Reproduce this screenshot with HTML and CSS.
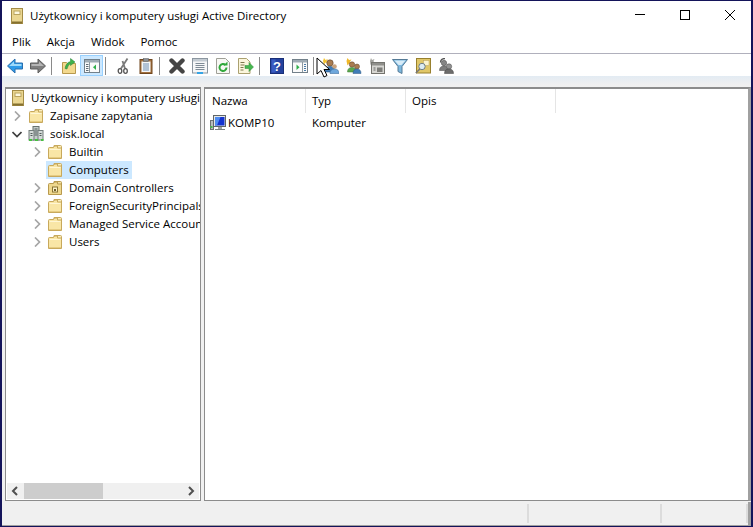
FILE: index.html
```html
<!DOCTYPE html>
<html lang="pl">
<head>
  <meta charset="UTF-8">
  <title>Użytkownicy i komputery usługi Active Directory</title>
  <link rel="stylesheet" href="styles.css">
</head>
<body>
<svg class="defs" width="0" height="0">
  <defs>
    <symbol id="i-folder" viewBox="0 0 16 16">
      <path d="M7 1.500h6.500q1 0 1 1V5H7z" fill="#fbeebb" stroke="#c8a95c"/>
      <path d="M1.500 4.500q0-1 1-1h4l1-1.500h3v2h4v10.500h-13z" fill="#f9e6a6" stroke="#c8a95c"/>
      <path d="M2.500 5.500h11" stroke="#fff6d4"/>
      <path d="M2 13.500h12" stroke="#e6cc82"/>
    </symbol>
    <symbol id="i-folder-ou" viewBox="0 0 16 16">
      <path d="M7 1.500h6.500q1 0 1 1V5H7z" fill="#f4e2a4" stroke="#b99a4e"/>
      <path d="M1.500 4.500q0-1 1-1h4l1-1.500h3v2h4v10.500h-13z" fill="#efd88e" stroke="#b99a4e"/>
      <rect x="5.500" y="7" width="5" height="5" fill="#fdf3c8" stroke="#8a7434"/>
      <rect x="7" y="9" width="2" height="2" fill="#6e5c26"/>
    </symbol>
    <symbol id="i-snapin" viewBox="0 0 16 16">
      <rect x="2.500" y="0.500" width="11" height="15" fill="#ead691" stroke="#a48c46"/>
      <rect x="5" y="3" width="6" height="3.500" fill="#fdf8df" stroke="#b9a35f"/>
      <path d="M3 14.500h10" stroke="#85702f" stroke-width="2"/>
    </symbol>
    <symbol id="i-domain" viewBox="0 0 16 16">
      <rect x="5" y="0.500" width="6" height="13.500" fill="#c4cccc" stroke="#67716f"/>
      <rect x="1" y="4.500" width="5" height="9.500" fill="#d4dad8" stroke="#727d7b"/>
      <rect x="10" y="4.500" width="5" height="9.500" fill="#d4dad8" stroke="#727d7b"/>
      <path d="M6.500 3h3M6.500 5h3M6.500 7h3M6.500 9h3M2.500 7.500h2M2.500 9.500h2M11.500 7.500h2M11.500 9.500h2" stroke="#4f5a59"/>
      <rect x="1" y="13" width="3" height="2" fill="#46c040"/>
      <rect x="7" y="13" width="3" height="2" fill="#46c040"/>
      <rect x="13" y="13" width="2.500" height="2" fill="#46c040"/>
    </symbol>
    <symbol id="i-computer" viewBox="0 0 16 16">
      <rect x="0.500" y="5.500" width="3" height="9" fill="#b8bebe" stroke="#6c7372"/>
      <rect x="0.500" y="11" width="2" height="2" fill="#49b949"/>
      <rect x="3.500" y="0.500" width="12" height="11" fill="#e4e6e6" stroke="#5f6668"/>
      <path d="M5 2h9.500v8.500H5z" fill="#1434d0"/>
      <path d="M5 2h5.500L7 10.500H5z" fill="#4f8cf2"/>
      <path d="M8 12h4v2H8z" fill="#9ea4a4"/>
      <path d="M5 14.500h10" stroke="#7c8282"/>
    </symbol>
    <symbol id="i-back" viewBox="0 0 16 16">
      <path d="M8 1 .5 8 8 15v-4h7.500V5H8z" fill="#2f9ae8" stroke="#2a6fae"/>
      <path d="M7 3.500 2 8h12.500V6H7z" fill="#9fdafb"/>
    </symbol>
    <symbol id="i-forward" viewBox="0 0 16 16">
      <path d="M8 1 15.500 8 8 15v-4H.500V5H8z" fill="#7f7f7f" stroke="#5e5e5e"/>
      <path d="M9 3.500 14 8H1.500V6H9z" fill="#b5b5b5"/>
    </symbol>
    <symbol id="i-up" viewBox="0 0 16 16">
      <path d="M1.500 15.500V4.500h4l1 1h8v10z" fill="#f3d98e" stroke="#b8994d"/>
      <path d="M4 10.500Q5 4.500 9.500 3.500V.500l4.500 3.500-4.500 3.500V5.800Q7 6.500 6 11z" fill="#3fb24a" stroke="#24803a" stroke-width=".5"/>
    </symbol>
    <symbol id="i-tree" viewBox="0 0 16 16">
      <rect x="0.500" y="1.500" width="15" height="13" fill="#fafafa" stroke="#72808a"/>
      <rect x="1" y="2" width="14" height="2.500" fill="#9fabb4"/>
      <path d="M5.500 4v10" stroke="#8d99a1"/>
      <path d="M2 6.500h2.500M2 8.500h2.500M2 10.500h2.500M2 12.500h2.500" stroke="#5f6c75"/>
      <path d="M12 6.500v5.500L9 9.250z" fill="#2faf4a"/>
    </symbol>
    <symbol id="i-cut" viewBox="0 0 16 16">
      <path d="M12.500.5 6 10.500M7.500 3l2.500 7.500" stroke="#7a7a7a" stroke-width="1.800" fill="none"/>
      <ellipse cx="5" cy="13" rx="1.800" ry="2.300" fill="none" stroke="#555" stroke-width="1.300"/>
      <ellipse cx="10.500" cy="13" rx="1.800" ry="2.300" fill="none" stroke="#555" stroke-width="1.300"/>
    </symbol>
    <symbol id="i-paste" viewBox="0 0 16 16">
      <rect x="2" y="1.500" width="12" height="14" fill="#a2703f" stroke="#70471f"/>
      <rect x="3.500" y="3.500" width="9" height="10.500" fill="#f4f6f8"/>
      <path d="M5 6h6M5 8h6M5 10h6M5 12h6" stroke="#6e8fb4"/>
      <rect x="5.500" y="0.500" width="5" height="3" fill="#8b8f94" stroke="#5a5e62" stroke-width=".5"/>
    </symbol>
    <symbol id="i-delete" viewBox="0 0 16 16">
      <path d="M2.500 2.500 13.500 13.500M13.500 2.500 2.500 13.500" stroke="#454545" stroke-width="4.400" stroke-linecap="round"/>
    </symbol>
    <symbol id="i-props" viewBox="0 0 16 16">
      <rect x="0.500" y="0.500" width="15" height="14.500" fill="#f6f7f8" stroke="#8c96a0"/>
      <rect x="1" y="1" width="14" height="2.500" fill="#c3cbd2"/>
      <path d="M3.500 5.500h9M3.500 7.500h9M3.500 9.500h9M3.500 11.500h9" stroke="#7f8b96"/>
      <path d="M5 14h6v2H5z" fill="#35a4e6"/>
    </symbol>
    <symbol id="i-refresh" viewBox="0 0 16 16">
      <path d="M1.500 .5h9l4 4v11h-13z" fill="#f8f8f4" stroke="#a0a098"/>
      <path d="M11.500 9.500a3.500 3.500 0 1 1-1-2.500" fill="none" stroke="#30a83a" stroke-width="2"/>
      <path d="M8.500 7.500h4V3.500z" fill="#30a83a"/>
    </symbol>
    <symbol id="i-export" viewBox="0 0 16 16">
      <path d="M.5 .5h8l3.500 3.500v11.500H.5z" fill="#fbf6dc" stroke="#aba170"/>
      <path d="M2.500 4.500h4M2.500 7h4M2.500 9.500h3M2.500 12h3" stroke="#7f784c"/>
      <path d="M7 7.500h4V4.500l4.500 4.500-4.500 4.500V10.500H7z" fill="#46b74f" stroke="#2d8a3b" stroke-width=".5"/>
    </symbol>
    <symbol id="i-help" viewBox="0 0 16 16">
      <rect x="1.500" y="0.500" width="13" height="15" fill="#24429e" stroke="#1a2f78"/>
      <rect x="2.500" y="1.500" width="4" height="13" fill="#3a5cc2"/>
      <text x="8" y="13" class="help-mark">?</text>
    </symbol>
    <symbol id="i-view" viewBox="0 0 16 16">
      <rect x="0.500" y="1.500" width="15" height="13" fill="#fafafa" stroke="#72808a"/>
      <rect x="1" y="2" width="14" height="2.500" fill="#9fabb4"/>
      <path d="M10.500 4v10" stroke="#8d99a1"/>
      <path d="M12 6.500h2M12 8.500h2M12 10.500h2M12 12.500h2" stroke="#4a7ba8"/>
      <path d="M4.500 6.500v5.500L7.500 9.250z" fill="#2faf4a"/>
    </symbol>
    <symbol id="i-user" viewBox="0 0 16 16">
      <path d="M0 3l1-3 1.500 2L5 1 3.500 3 5 5 2.500 4.500 1 6.500z" fill="#f4c430"/>
      <circle cx="7" cy="5" r="3.200" fill="#a97c50" stroke="#5e4228" stroke-width=".6"/>
      <path d="M2 14q0-5.500 5-5.500T12 14z" fill="#3f7db8" stroke="#2a5685" stroke-width=".6"/>
      <circle cx="11.500" cy="8.500" r="2.300" fill="#c8a27c"/>
      <path d="M7 15.500q0-4.500 4.500-4.500T16 15.500z" fill="#6ea7dc" stroke="#3e6f9f" stroke-width=".6"/>
    </symbol>
    <symbol id="i-group" viewBox="0 0 16 16">
      <path d="M.5 3l1-3L3 2l2.500-.5L4 3.500 5.500 6 3 5.500 1.500 7.500z" fill="#f0b828"/>
      <circle cx="6" cy="6.500" r="2.700" fill="#a97c50" stroke="#5e4228" stroke-width=".5"/>
      <path d="M1.500 14q0-4.500 4.500-4.500T10.500 14z" fill="#5aa84f" stroke="#3a7a33" stroke-width=".5"/>
      <circle cx="11" cy="8.500" r="2.500" fill="#a97c50" stroke="#5e4228" stroke-width=".5"/>
      <path d="M7 15.500q0-4.500 4-4.500t4 4.500z" fill="#3f7db8" stroke="#2a5685" stroke-width=".5"/>
    </symbol>
    <symbol id="i-ou" viewBox="0 0 16 16">
      <path d="M1 3l1-3 1 2L5.500 1 4.500 3l1 2.500L3 5 1.500 7z" fill="#a4a4a0"/>
      <rect x="2.500" y="4.500" width="13" height="11" fill="#d6d6d2" stroke="#74746f"/>
      <rect x="3" y="5" width="12" height="2.500" fill="#8f8f8b"/>
      <rect x="8" y="9.500" width="5.500" height="4.500" fill="#7d7d79"/>
      <path d="M4.500 10h2M4.500 12h2" stroke="#666"/>
    </symbol>
    <symbol id="i-filter" viewBox="0 0 16 16">
      <path d="M.5 1.500h15L10 8.500v7l-4-2v-5z" fill="#7db8de" stroke="#557a96"/>
      <path d="M2.500 2.500h11L9.500 7h-3z" fill="#d8ecf8"/>
    </symbol>
    <symbol id="i-find" viewBox="0 0 16 16">
      <rect x="1.500" y="0.500" width="14" height="14.500" fill="#e0c768" stroke="#98802e"/>
      <rect x="8.500" y="2.500" width="5.500" height="5" fill="#fbf4d0" stroke="#b9a35f" stroke-width=".5"/>
      <circle cx="7" cy="8.500" r="3.200" fill="#dcecf4" stroke="#6f7e86"/>
      <path d="M4.800 11 .8 15" stroke="#777" stroke-width="1.600"/>
    </symbol>
    <symbol id="i-delegate" viewBox="0 0 16 16">
      <path d="M2.500 4.500Q2.500 .5 7 .5" fill="none" stroke="#555" stroke-width="1.300"/>
      <circle cx="6" cy="5" r="2.700" fill="#858585" stroke="#4a4a4a" stroke-width=".5"/>
      <path d="M1.500 12.500q0-4.500 4.500-4.500t4.500 4.500z" fill="#7c7c7c" stroke="#4a4a4a" stroke-width=".5"/>
      <circle cx="11" cy="8.500" r="2.700" fill="#929292" stroke="#4a4a4a" stroke-width=".5"/>
      <path d="M6.500 15.500q0-4.500 4.500-4.500t4.500 4.500z" fill="#6c6c6c" stroke="#404040" stroke-width=".5"/>
    </symbol>
  </defs>
</svg>

<div class="window">
  <div class="titlebar">
    <svg class="title-icon"><use href="#i-snapin"/></svg>
    <div class="title-text">Użytkownicy i komputery usługi Active Directory</div>
    <div class="win-buttons">
      <div class="win-btn"><svg width="12" height="12" viewBox="0 0 12 12"><path d="M1 5.500h10" stroke="#000"/></svg></div>
      <div class="win-btn"><svg width="12" height="12" viewBox="0 0 12 12"><rect x="1.500" y="1.500" width="9" height="9" fill="none" stroke="#000"/></svg></div>
      <div class="win-btn"><svg width="12" height="12" viewBox="0 0 12 12"><path d="M1 1l10 10M11 1 1 11" stroke="#000" stroke-width="1"/></svg></div>
    </div>
  </div>

  <div class="menubar">
    <span class="menu-item">Plik</span>
    <span class="menu-item">Akcja</span>
    <span class="menu-item">Widok</span>
    <span class="menu-item">Pomoc</span>
  </div>

  <div class="toolbar">
    <div class="tool"><svg class="icon"><use href="#i-back"/></svg></div>
    <div class="tool"><svg class="icon"><use href="#i-forward"/></svg></div>
    <div class="tool-sep"></div>
    <div class="tool"><svg class="icon"><use href="#i-up"/></svg></div>
    <div class="tool tool-active"><svg class="icon"><use href="#i-tree"/></svg></div>
    <div class="tool-sep"></div>
    <div class="tool"><svg class="icon"><use href="#i-cut"/></svg></div>
    <div class="tool"><svg class="icon"><use href="#i-paste"/></svg></div>
    <div class="tool-sep"></div>
    <div class="tool"><svg class="icon"><use href="#i-delete"/></svg></div>
    <div class="tool"><svg class="icon"><use href="#i-props"/></svg></div>
    <div class="tool"><svg class="icon"><use href="#i-refresh"/></svg></div>
    <div class="tool"><svg class="icon"><use href="#i-export"/></svg></div>
    <div class="tool-sep"></div>
    <div class="tool"><svg class="icon"><use href="#i-help"/></svg></div>
    <div class="tool"><svg class="icon"><use href="#i-view"/></svg></div>
    <div class="tool-sep"></div>
    <div class="tool">
      <svg class="icon"><use href="#i-user"/></svg>
      <svg class="cursor" width="14" height="21" viewBox="0 0 14 21"><path d="M1 1v16l4-3.500L8 20l3-1.500-3-6h5.500z" fill="#fff" stroke="#000"/></svg>
    </div>
    <div class="tool"><svg class="icon"><use href="#i-group"/></svg></div>
    <div class="tool"><svg class="icon"><use href="#i-ou"/></svg></div>
    <div class="tool"><svg class="icon"><use href="#i-filter"/></svg></div>
    <div class="tool"><svg class="icon"><use href="#i-find"/></svg></div>
    <div class="tool"><svg class="icon"><use href="#i-delegate"/></svg></div>
  </div>

  <div class="content">
    <div class="tree-pane">
      <div class="tree">
        <div class="tree-row depth-0">
          <svg class="icon"><use href="#i-snapin"/></svg>
          <span class="tree-label">Użytkownicy i komputery usługi</span>
        </div>
        <div class="tree-row depth-1">
          <svg class="chevron" viewBox="0 0 10 10"><path d="M3 .5 7.500 5 3 9.500" class="chev-closed"/></svg>
          <svg class="icon"><use href="#i-folder"/></svg>
          <span class="tree-label">Zapisane zapytania</span>
        </div>
        <div class="tree-row depth-1">
          <svg class="chevron" viewBox="0 0 10 10"><path d="M.5 3 5 7.500 9.500 3" class="chev-open"/></svg>
          <svg class="icon"><use href="#i-domain"/></svg>
          <span class="tree-label">soisk.local</span>
        </div>
        <div class="tree-row depth-2">
          <svg class="chevron" viewBox="0 0 10 10"><path d="M3 .5 7.500 5 3 9.500" class="chev-closed"/></svg>
          <svg class="icon"><use href="#i-folder"/></svg>
          <span class="tree-label">Builtin</span>
        </div>
        <div class="tree-row depth-2">
          <span class="chevron"></span>
          <div class="selected">
            <svg class="icon"><use href="#i-folder"/></svg>
            <span class="tree-label">Computers</span>
          </div>
        </div>
        <div class="tree-row depth-2">
          <svg class="chevron" viewBox="0 0 10 10"><path d="M3 .5 7.500 5 3 9.500" class="chev-closed"/></svg>
          <svg class="icon"><use href="#i-folder-ou"/></svg>
          <span class="tree-label">Domain Controllers</span>
        </div>
        <div class="tree-row depth-2">
          <svg class="chevron" viewBox="0 0 10 10"><path d="M3 .5 7.500 5 3 9.500" class="chev-closed"/></svg>
          <svg class="icon"><use href="#i-folder"/></svg>
          <span class="tree-label">ForeignSecurityPrincipals</span>
        </div>
        <div class="tree-row depth-2">
          <svg class="chevron" viewBox="0 0 10 10"><path d="M3 .5 7.500 5 3 9.500" class="chev-closed"/></svg>
          <svg class="icon"><use href="#i-folder"/></svg>
          <span class="tree-label">Managed Service Accounts</span>
        </div>
        <div class="tree-row depth-2">
          <svg class="chevron" viewBox="0 0 10 10"><path d="M3 .5 7.500 5 3 9.500" class="chev-closed"/></svg>
          <svg class="icon"><use href="#i-folder"/></svg>
          <span class="tree-label">Users</span>
        </div>
      </div>
      <div class="scrollbar">
        <svg class="scroll-arrow" viewBox="0 0 17 16"><path d="M10 4 6 8l4 4"/></svg>
        <div class="scroll-track"><div class="scroll-thumb"></div></div>
        <svg class="scroll-arrow" viewBox="0 0 17 16"><path d="M7 4l4 4-4 4"/></svg>
      </div>
    </div>

    <div class="list-pane">
      <div class="list-header">
        <div class="col col-name">Nazwa</div>
        <div class="col col-type">Typ</div>
        <div class="col col-desc">Opis</div>
      </div>
      <div class="list-row">
        <div class="cell-name"><svg class="icon"><use href="#i-computer"/></svg><span class="cell-text">KOMP10</span></div>
        <div class="cell-type">Komputer</div>
      </div>
    </div>
  </div>

  <div class="statusbar">
    <div class="status-cell status-main"></div>
    <div class="status-cell status-mid"></div>
    <div class="status-cell status-end"></div>
  </div>
</div>
</body>
</html>
```

FILE: styles.css
```css
* {
  box-sizing: border-box;
}

body {
  margin: 0;
  font-family: "Open Sans", "Noto Sans", sans-serif;
  font-size: 11.500px;
  color: #000;
  background: #fff;
}

.defs {
  position: absolute;
}

.help-mark {
  font-family: "Liberation Sans", sans-serif;
  font-size: 13px;
  font-weight: bold;
  fill: #fff;
  text-anchor: middle;
}

.window {
  width: 753px;
  height: 527px;
  display: flex;
  flex-direction: column;
  border: 1px solid #14145a;
  border-left-width: 2px;
  border-right-width: 2px;
  background: #fff;
  overflow: hidden;
}

.icon {
  width: 16px;
  height: 16px;
  flex: none;
}

/* title bar */
.titlebar {
  height: 30px;
  flex: none;
  display: flex;
  align-items: center;
  padding-left: 7px;
}

.title-icon {
  width: 16px;
  height: 16px;
  flex: none;
  margin-top: -1px;
}

.title-text {
  margin-left: 5px;
  padding-bottom: 2px;
  flex: 1;
}

.win-buttons {
  display: flex;
  align-self: flex-start;
  margin-right: -1px;
}

.win-btn {
  width: 45px;
  height: 28px;
  display: flex;
  align-items: center;
  justify-content: center;
}

/* menu */
.menubar {
  height: 23px;
  flex: none;
  display: flex;
  align-items: center;
  gap: 16px;
  padding: 0 0 2px 10px;
  border-bottom: 1px solid #b0b0bc;
}

/* toolbar */
.toolbar {
  height: 22px;
  flex: none;
  display: flex;
  align-items: center;
  padding: 1px 0 0 1px;
}

.tool {
  width: 23px;
  height: 21px;
  flex: none;
  display: flex;
  align-items: center;
  justify-content: center;
  padding-top: 1px;
  position: relative;
}

.tool-active {
  background: #cce8ff;
  border: 1px solid #99d1ff;
}

.tool-sep {
  width: 1px;
  height: 18px;
  flex: none;
  margin: 0 5px 0 2px;
  background: #8a8a8a;
}

.cursor {
  position: absolute;
  left: -3px;
  top: 2px;
}

/* panes */
.content {
  flex: 1;
  min-height: 0;
  display: flex;
  gap: 3px;
  padding: 11px 0 1px 3px;
  background: linear-gradient(#e3ebf3, #f0f0f0 9px);
}

.tree-pane {
  width: 196px;
  flex: none;
  display: flex;
  flex-direction: column;
  background: #fff;
  border: 1px solid #8c8c8c;
  border-top: 2px solid #8c8c8c;
}

.tree {
  flex: 1;
  min-height: 0;
  overflow: hidden;
}

.tree-row {
  height: 18px;
  display: flex;
  align-items: center;
  white-space: nowrap;
  overflow: hidden;
}

.depth-0 {
  padding-left: 4px;
}

.depth-0 .tree-label {
  margin-left: 5px;
}

.depth-1 {
  padding-left: 6px;
}

.depth-2 {
  padding-left: 26px;
}

.chevron {
  width: 10px;
  height: 10px;
  flex: none;
  margin-right: 6px;
}

.depth-2 .chevron {
  margin-right: 5px;
}

.chev-closed {
  fill: none;
  stroke: #a6a6a6;
  stroke-width: 1.700;
}

.chev-open {
  fill: none;
  stroke: #404040;
  stroke-width: 1.700;
}

.tree-label {
  margin-left: 6px;
  padding-bottom: 2px;
}

.selected {
  display: flex;
  align-items: center;
  height: 18px;
  background: #cce8ff;
  padding: 0 3px 0 1px;
  margin-left: -1px;
}

.scrollbar {
  height: 16px;
  flex: none;
  display: flex;
  align-items: center;
  margin: 0 1px 1px;
  background: #f0f0f0;
}

.scroll-arrow {
  width: 17px;
  height: 16px;
  flex: none;
  fill: none;
  stroke: #505050;
  stroke-width: 2;
}

.scroll-track {
  flex: 1;
  height: 16px;
}

.scroll-thumb {
  width: 79px;
  height: 16px;
  background: #cdcdcd;
}

.list-pane {
  flex: 1;
  background: #fff;
  border: 1px solid #8c8c8c;
  border-top: 2px solid #8c8c8c;
  border-right: 3px solid #a0a0a0;
}

.list-header {
  height: 24px;
  display: flex;
}

.col {
  height: 24px;
  display: flex;
  align-items: center;
  padding: 0 0 2px 6px;
  border-right: 1px solid #e5e5e5;
}

.col-name {
  width: 101px;
  padding-left: 7px;
}

.col-type {
  width: 100px;
}

.col-desc {
  width: 150px;
}

.list-row {
  height: 20px;
  display: flex;
  align-items: center;
}

.cell-name {
  width: 101px;
  display: flex;
  align-items: center;
  gap: 2px;
  padding-left: 5px;
}

.cell-text {
  padding-bottom: 2px;
}

.cell-type {
  padding: 0 0 2px 6px;
}

/* status bar */
.statusbar {
  height: 24px;
  flex: none;
  display: flex;
  background: #f0f0f0;
  padding: 2px 0;
  border-bottom: 1px solid #a0a0a0;
  border-right: 3px solid #a0a0a0;
}

.status-cell {
  border-right: 2px solid #dcdcdc;
}

.status-main {
  width: 527px;
}

.status-mid {
  width: 133px;
}

.status-end {
  flex: 1;
}
```
